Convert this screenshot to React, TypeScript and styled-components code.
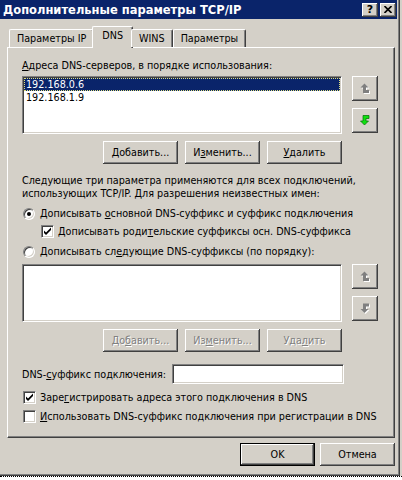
import React from "react";
import styled, { createGlobalStyle, css } from "styled-components";

const FACE = "#d4d0c8";
const SHADOW = "#808080";
const DARK = "#404040";
const HILITE = "#ffffff";
const NAVY = "#0a246a";

const Global = createGlobalStyle`
  html, body { margin: 0; padding: 0; background: ${FACE}; }
  body {
    font-family: "DejaVu Sans Condensed", "DejaVu Sans", Verdana, sans-serif;
    font-size: 10.7px;
    color: #000;
  }
  * { box-sizing: border-box; }
  u { text-decoration: underline; text-underline-offset: 1px; }
`;

const raised = css`
  background: ${FACE};
  box-shadow: inset -1px -1px 0 ${DARK}, inset 1px 1px 0 ${HILITE},
    inset -2px -2px 0 ${SHADOW}, inset 2px 2px 0 ${FACE};
`;

const sunken = css`
  border-style: solid;
  border-width: 1px;
  border-color: ${SHADOW} ${HILITE} ${HILITE} ${SHADOW};
  box-shadow: inset 1px 1px 0 ${DARK}, inset -1px -1px 0 ${FACE};
  background: #fff;
`;

const Window = styled.div`
  width: 400px;
  height: 476px;
  background: ${FACE};
  border-right: 1px solid ${DARK};
  border-bottom: 1px solid ${DARK};
  box-shadow: inset -1px -1px 0 ${SHADOW};
  display: flex;
  flex-direction: column;
`;

const Desktop = styled.div`
  height: 4px;
  background: #fff;
  border-top: 1px dotted #000;
`;

const TitleBar = styled.div`
  height: 19px;
  margin-right: 2px;
  background: ${NAVY};
  display: flex;
  align-items: center;
  padding: 0 1px 0 3px;
`;

const Title = styled.div`
  flex: 1;
  color: #fff;
  font-family: "DejaVu Sans", Verdana, sans-serif;
  font-weight: bold;
  font-size: 11.5px;
`;

const CaptionButtons = styled.div`
  display: flex;
  gap: 2px;
`;

const CaptionButton = styled.div`
  ${raised};
  width: 16px;
  height: 14px;
  display: flex;
  align-items: center;
  justify-content: center;
  font-family: "DejaVu Sans", Verdana, sans-serif;
  font-weight: bold;
  font-size: 11px;
  line-height: 1;
  padding-bottom: 1px;
`;

const Body = styled.div`
  padding: 7px 0 0 7px;
  display: flex;
  flex-direction: column;
`;

const TabsRow = styled.div`
  height: 21px;
  display: flex;
  align-items: flex-end;
  padding-left: 2px;
  position: relative;
  z-index: 1;
`;

const Tab = styled.div<{ $active?: boolean }>`
  height: ${(p) => (p.$active ? 22 : 18)}px;
  margin-bottom: ${(p) => (p.$active ? -1 : 0)}px;
  padding: 0 ${(p) => (p.$active ? 9 : 7)}px;
  margin-left: ${(p) => (p.$active ? -2 : 0)}px;
  margin-right: ${(p) => (p.$active ? -2 : 0)}px;
  background: ${FACE};
  border-top: 1px solid ${HILITE};
  border-left: 1px solid ${HILITE};
  border-right: 1px solid ${DARK};
  border-top-left-radius: 2px;
  border-top-right-radius: 2px;
  box-shadow: inset -1px 0 0 ${SHADOW};
  display: flex;
  align-items: ${(p) => (p.$active ? "flex-start" : "center")};
  padding-top: ${(p) => (p.$active ? 2 : 0)}px;
  white-space: nowrap;
`;

const Panel = styled.div`
  width: 388px;
  height: 391px;
  border-top: 1px solid ${HILITE};
  border-left: 1px solid ${HILITE};
  border-right: 1px solid ${DARK};
  border-bottom: 1px solid ${DARK};
  box-shadow: inset -1px -1px 0 ${SHADOW};
  padding: 11px 0 0 14px;
  display: flex;
  flex-direction: column;
`;

const Line = styled.div<{ $mt?: number; $indent?: number }>`
  height: 13px;
  line-height: 13px;
  margin-top: ${(p) => p.$mt ?? 0}px;
  padding-left: ${(p) => p.$indent ?? 0}px;
  white-space: nowrap;
  display: flex;
  align-items: center;
`;

const Para = styled.div<{ $mt?: number }>`
  margin-top: ${(p) => p.$mt ?? 0}px;
  line-height: 13px;
  white-space: nowrap;
`;

const ListRow = styled.div<{ $mt?: number }>`
  margin-top: ${(p) => p.$mt ?? 0}px;
  display: flex;
  gap: 10px;
`;

const ListBox = styled.div`
  ${sunken};
  width: 320px;
  height: 58px;
  padding: 1px;
  display: flex;
  flex-direction: column;
`;

const ListItem = styled.div<{ $selected?: boolean }>`
  height: 13px;
  line-height: 13px;
  padding-left: 2px;
  background: ${(p) => (p.$selected ? NAVY : "transparent")};
  color: ${(p) => (p.$selected ? "#fff" : "#000")};
  outline: ${(p) => (p.$selected ? `1px dotted #e0e080` : "none")};
  outline-offset: -1px;
`;

const SideButtons = styled.div`
  display: flex;
  flex-direction: column;
  gap: 7px;
`;

const ArrowButton = styled.div`
  ${raised};
  width: 26px;
  height: 25px;
  display: flex;
  align-items: center;
  justify-content: center;
`;

const ButtonRow = styled.div<{ $mt?: number }>`
  margin-top: ${(p) => p.$mt ?? 0}px;
  width: 320px;
  display: flex;
  justify-content: flex-end;
  gap: 7px;
`;

const Button = styled.div<{ $disabled?: boolean; $default?: boolean }>`
  ${raised};
  width: 75px;
  height: 23px;
  display: flex;
  align-items: center;
  justify-content: center;
  white-space: nowrap;
  color: ${(p) => (p.$disabled ? SHADOW : "#000")};
  text-shadow: ${(p) => (p.$disabled ? `1px 1px 0 ${HILITE}` : "none")};
  ${(p) =>
    p.$default &&
    css`
      box-shadow: inset 0 0 0 1px #000, inset -2px -2px 0 ${DARK},
        inset 2px 2px 0 ${HILITE}, inset -3px -3px 0 ${SHADOW};
    `}
`;

const Radio = styled.div<{ $checked?: boolean }>`
  width: 12px;
  height: 12px;
  margin-left: 1px;
  margin-right: 5px;
  border-radius: 50%;
  border: 1px solid;
  border-color: ${SHADOW} ${HILITE} ${HILITE} ${SHADOW};
  box-shadow: inset 1px 1px 0 ${DARK}, inset -1px -1px 0 ${FACE};
  background: #fff;
  display: flex;
  align-items: center;
  justify-content: center;
  flex-shrink: 0;
  &::after {
    content: "";
    display: ${(p) => (p.$checked ? "block" : "none")};
    width: 4px;
    height: 4px;
    border-radius: 50%;
    background: #000;
  }
`;

const CheckBox = styled.div`
  ${sunken};
  width: 13px;
  height: 13px;
  margin-left: 1px;
  margin-right: 4px;
  flex-shrink: 0;
  display: flex;
  align-items: center;
  justify-content: center;
`;

const SuffixRow = styled.div<{ $mt?: number }>`
  margin-top: ${(p) => p.$mt ?? 0}px;
  display: flex;
  align-items: center;
`;

const SuffixLabel = styled.div`
  width: 150px;
  white-space: nowrap;
`;

const TextInput = styled.div`
  ${sunken};
  width: 172px;
  height: 20px;
`;

const Footer = styled.div`
  margin-top: 5px;
  padding-right: 4px;
  display: flex;
  justify-content: flex-end;
  gap: 5px;
`;

function UpArrow({ enabled }: { enabled?: boolean }) {
  const pts = "4.5,0.5 8.5,4.5 6,4.5 6,7 9,7 9,10 3,10 3,4.5 0.5,4.5";
  return (
    <svg width="11" height="12" viewBox="0 0 11 12">
      {!enabled && <polygon points={pts} fill="#fff" transform="translate(1,1)" />}
      <polygon
        points={pts}
        fill={enabled ? "#10e010" : SHADOW}
        stroke={enabled ? "#007000" : "none"}
        strokeWidth={0.7}
      />
    </svg>
  );
}

function DownArrow({ enabled }: { enabled?: boolean }) {
  const pts = "3,0.5 9,0.5 9,3.5 6,3.5 6,6 8.5,6 4.5,10 0.5,6 3,6";
  return (
    <svg width="11" height="12" viewBox="0 0 11 12">
      {!enabled && <polygon points={pts} fill="#fff" transform="translate(1,1)" />}
      <polygon
        points={pts}
        fill={enabled ? "#10e010" : SHADOW}
        stroke={enabled ? "#007000" : "none"}
        strokeWidth={0.7}
      />
    </svg>
  );
}

function Check() {
  return (
    <svg width="9" height="9" viewBox="0 0 9 9">
      <path d="M1 3.5 L3 5.5 L8 0.5 L8 3 L3 8 L1 6 Z" fill="#000" />
    </svg>
  );
}

function CloseGlyph() {
  return (
    <svg width="8" height="7" viewBox="0 0 8 7">
      <path d="M0.5 0 L7.5 7 M7.5 0 L0.5 7" stroke="#000" strokeWidth="1.6" />
    </svg>
  );
}

export default function App() {
  return (
    <>
      <Global />
      <Window>
        <TitleBar>
          <Title>Дополнительные параметры TCP/IP</Title>
          <CaptionButtons>
            <CaptionButton>?</CaptionButton>
            <CaptionButton>
              <CloseGlyph />
            </CaptionButton>
          </CaptionButtons>
        </TitleBar>
        <Body>
          <TabsRow>
            <Tab>Параметры IP</Tab>
            <Tab $active>DNS</Tab>
            <Tab>WINS</Tab>
            <Tab>Параметры</Tab>
          </TabsRow>
          <Panel>
            <Line>
              <span>
                <u>А</u>дреса DNS-серверов, в порядке использования:
              </span>
            </Line>
            <ListRow $mt={4}>
              <ListBox>
                <ListItem $selected>192.168.0.6</ListItem>
                <ListItem>192.168.1.9</ListItem>
              </ListBox>
              <SideButtons>
                <ArrowButton>
                  <UpArrow />
                </ArrowButton>
                <ArrowButton>
                  <DownArrow enabled />
                </ArrowButton>
              </SideButtons>
            </ListRow>
            <ButtonRow $mt={7}>
              <Button>
                <span>
                  <u>Д</u>обавить...
                </span>
              </Button>
              <Button>
                <span>
                  И<u>з</u>менить...
                </span>
              </Button>
              <Button>
                <span>
                  <u>У</u>далить
                </span>
              </Button>
            </ButtonRow>
            <Para $mt={10}>
              Следующие три параметра применяются для всех подключений,
              <br />
              использующих TCP/IP. Для разрешения неизвестных имен:
            </Para>
            <Line $mt={7}>
              <Radio $checked />
              <span>
                Дописывать <u>о</u>сновной DNS-суффикс и суффикс подключения
              </span>
            </Line>
            <Line $mt={5} $indent={18}>
              <CheckBox>
                <Check />
              </CheckBox>
              <span>
                Дописывать роди<u>т</u>ельские суффиксы осн. DNS-суффикса
              </span>
            </Line>
            <Line $mt={7}>
              <Radio />
              <span>
                Дописывать сл<u>е</u>дующие DNS-суффиксы (по порядку):
              </span>
            </Line>
            <ListRow $mt={6}>
              <ListBox />
              <SideButtons>
                <ArrowButton>
                  <UpArrow />
                </ArrowButton>
                <ArrowButton>
                  <DownArrow />
                </ArrowButton>
              </SideButtons>
            </ListRow>
            <ButtonRow $mt={7}>
              <Button $disabled>
                <span>
                  До<u>б</u>авить...
                </span>
              </Button>
              <Button $disabled>
                <span>
                  Из<u>м</u>енить...
                </span>
              </Button>
              <Button $disabled>
                <span>
                  Уда<u>л</u>ить
                </span>
              </Button>
            </ButtonRow>
            <SuffixRow $mt={12}>
              <SuffixLabel>
                DNS-<u>с</u>уффикс подключения:
              </SuffixLabel>
              <TextInput />
            </SuffixRow>
            <Line $mt={7}>
              <CheckBox>
                <Check />
              </CheckBox>
              <span>
                Заре<u>г</u>истрировать адреса этого подключения в DNS
              </span>
            </Line>
            <Line $mt={6}>
              <CheckBox />
              <span>
                <u>И</u>спользовать DNS-суффикс подключения при регистрации в DNS
              </span>
            </Line>
          </Panel>
          <Footer>
            <Button $default>OK</Button>
            <Button>Отмена</Button>
          </Footer>
        </Body>
      </Window>
      <Desktop />
    </>
  );
}
